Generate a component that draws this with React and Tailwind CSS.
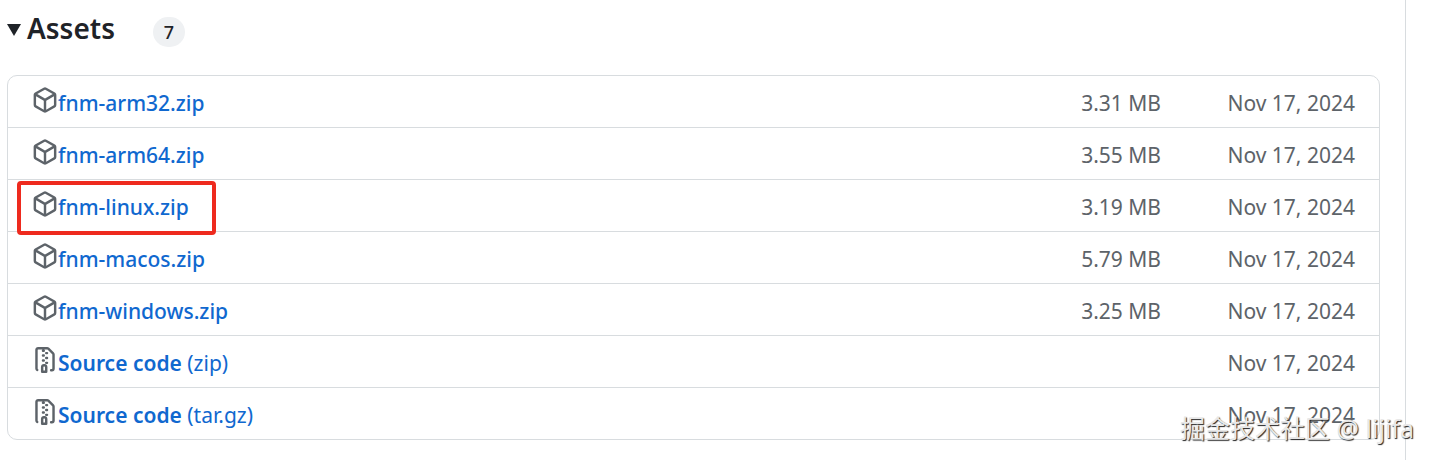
import React from 'react';
import { clsx } from 'clsx';

const DATE = 'Nov 17, 2024';

const assets = [
    { name: 'fnm-arm32.zip', size: '3.31 MB', date: DATE },
    { name: 'fnm-arm64.zip', size: '3.55 MB', date: DATE },
    { name: 'fnm-linux.zip', size: '3.19 MB', date: DATE, highlighted: true },
    { name: 'fnm-macos.zip', size: '5.79 MB', date: DATE },
    { name: 'fnm-windows.zip', size: '3.25 MB', date: DATE },
    { name: 'Source code', format: '(zip)', date: DATE },
    { name: 'Source code', format: '(tar.gz)', date: DATE },
];

function PackageIcon() {
    return (
        <svg className="size-[26px] shrink-0 fill-[#5d6369]" viewBox="0 0 16 16" aria-hidden="true">
            <path d="m8.878.392 5.25 3.045c.54.314.872.89.872 1.514v6.098a1.75 1.75 0 0 1-.872 1.514l-5.25 3.045a1.75 1.75 0 0 1-1.756 0l-5.25-3.045A1.75 1.75 0 0 1 1 11.049V4.951c0-.624.332-1.201.872-1.514L7.122.392a1.75 1.75 0 0 1 1.756 0ZM7.875 1.69l-4.63 2.685L8 7.133l4.755-2.758-4.63-2.685a.248.248 0 0 0-.25 0ZM2.5 5.677v5.372c0 .09.047.171.125.216l4.625 2.683V8.432Zm6.25 8.271 4.625-2.683a.25.25 0 0 0 .125-.216V5.677L8.75 8.432Z" />
        </svg>
    );
}

function ZipIcon() {
    return (
        <svg className="size-[26px] shrink-0 fill-[#5d6369]" viewBox="0 0 16 16" aria-hidden="true">
            <path d="M3.5 1.75v11.5c0 .09.048.173.126.217a.75.75 0 0 1-.752 1.298A1.748 1.748 0 0 1 2 13.25V1.75C2 .784 2.784 0 3.75 0h5.586c.464 0 .909.185 1.237.513l2.914 2.914c.329.328.513.773.513 1.237v8.586A1.75 1.75 0 0 1 12.25 15h-.5a.75.75 0 0 1 0-1.5h.5a.25.25 0 0 0 .25-.25V4.664a.25.25 0 0 0-.073-.177L9.513 1.573a.25.25 0 0 0-.177-.073H7.25a.75.75 0 0 1 0 1.5h-.5a.75.75 0 0 1 0-1.5h-3a.25.25 0 0 0-.25.25Zm3.75 8.75h.5c.966 0 1.75.784 1.75 1.75v3a.75.75 0 0 1-.75.75h-2.5a.75.75 0 0 1-.75-.75v-3c0-.966.784-1.75 1.75-1.75ZM6 5.25a.75.75 0 0 1 .75-.75h.5a.75.75 0 0 1 0 1.5h-.5A.75.75 0 0 1 6 5.25Zm.75 2.25h.5a.75.75 0 0 1 0 1.5h-.5a.75.75 0 0 1 0-1.5ZM8 6.75A.75.75 0 0 1 8.75 6h.5a.75.75 0 0 1 0 1.5h-.5A.75.75 0 0 1 8 6.75ZM8.75 3h.5a.75.75 0 0 1 0 1.5h-.5a.75.75 0 0 1 0-1.5ZM8 9.75A.75.75 0 0 1 8.75 9h.5a.75.75 0 0 1 0 1.5h-.5A.75.75 0 0 1 8 9.75Zm-1 2.5v2.25h1v-2.25a.25.25 0 0 0-.25-.25h-.5a.25.25 0 0 0-.25.25Z" />
        </svg>
    );
}

function AssetRow({ asset }) {
    const { name, format, size, date, highlighted } = asset;

    return (
        <li className={clsx('flex items-center px-6 pt-[11px] pb-2 text-[21px] leading-8', { relative: highlighted })}>
            <div className="flex flex-1 items-start">
                {format ? <ZipIcon /> : <PackageIcon />}
                <a href="#" className="text-[#1068cf]">
                    <span className={format ? 'font-semibold' : 'font-medium'}>{name}</span>
                    {format && <span> {format}</span>}
                </a>
            </div>
            <span className="text-[#5d6369]">{size}</span>
            <span className="w-[194px] text-right text-[#5d6369]">{date}</span>
            {highlighted && (
                <div className="pointer-events-none absolute top-px left-[9px] h-[54px] w-[199px] rounded-sm border-4 border-[#ee2a1e]" />
            )}
        </li>
    );
}

function App() {
    return (
        <div className="relative min-h-screen bg-white pr-6 font-['Noto_Sans','Noto_Sans_CJK_SC',sans-serif]">
            <main className="min-h-screen border-r border-[#d8dcdf] pt-2 pr-[25px] pl-[7px]">
                <details open>
                    <summary className="flex list-none items-center text-[#1f2328]">
                        <svg className="mt-1 mr-1.5 h-3 w-3.5 fill-current" viewBox="0 0 14 12" aria-hidden="true">
                            <path d="M0 0h14L7 12Z" />
                        </svg>
                        <h3 className="text-[28px] leading-10 font-semibold">Assets</h3>
                        <span className="mt-2 ml-[38px] flex h-[30px] w-8 items-center justify-center rounded-full bg-[#eff1f3] text-lg font-medium">
                            {assets.length}
                        </span>
                    </summary>
                    <ul className="mt-[27px] divide-y divide-[#d8dcdf] rounded-[10px] border border-[#d8dcdf]">
                        {assets.map((asset) => (
                            <AssetRow key={asset.name + (asset.format || '')} asset={asset} />
                        ))}
                    </ul>
                </details>
            </main>
            <p className="absolute right-4 bottom-3.5 text-[25px] leading-9 text-[#e8e8e8] [text-shadow:1px_1px_1px_#222]">
                掘金技术社区 @ lijifa
            </p>
        </div>
    );
}

export default App;
